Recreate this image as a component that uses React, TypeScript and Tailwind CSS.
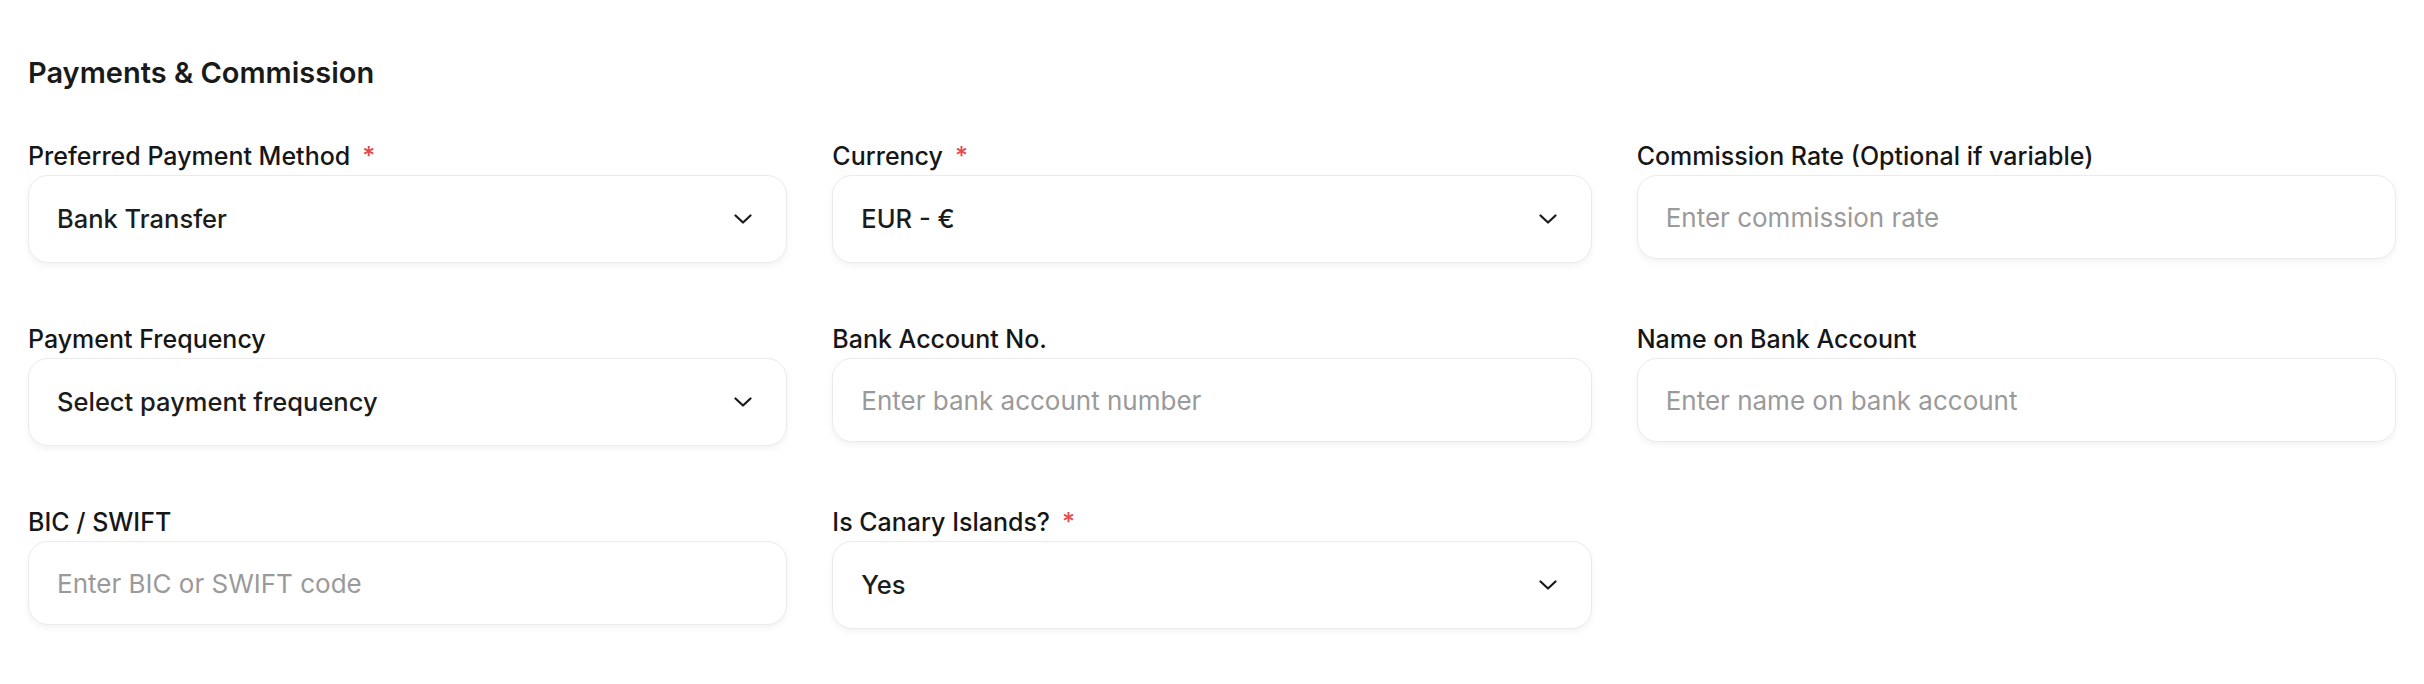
import React from "react"

type Field = {
  label: string
  required?: boolean
  kind: "select" | "input"
  value?: string
  placeholder?: string
}

const fields: Field[] = [
  { label: "Preferred Payment Method", required: true, kind: "select", value: "Bank Transfer" },
  { label: "Currency", required: true, kind: "select", value: "EUR - €" },
  { label: "Commission Rate (Optional if variable)", kind: "input", placeholder: "Enter commission rate" },
  { label: "Payment Frequency", kind: "select", value: "Select payment frequency" },
  { label: "Bank Account No.", kind: "input", placeholder: "Enter bank account number" },
  { label: "Name on Bank Account", kind: "input", placeholder: "Enter name on bank account" },
  { label: "BIC / SWIFT", kind: "input", placeholder: "Enter BIC or SWIFT code" },
  { label: "Is Canary Islands?", required: true, kind: "select", value: "Yes" },
]

function Chevron() {
  return (
    <svg width="18" height="10" viewBox="0 0 18 10" fill="none" className="shrink-0">
      <path d="M1.5 1.5 9 8.5l7.5-7" stroke="#1a1a1a" strokeWidth="2.2" strokeLinecap="round" strokeLinejoin="round" />
    </svg>
  )
}

function FormField({ field }: { field: Field }) {
  return (
    <div className="flex flex-col">
      {/* etiqueta */}
      <label className="mb-[6px] flex items-center text-[25px] leading-none font-medium text-[#161616]">
        {field.label}
        {field.required && <span className="ml-[12px] text-[#e5484d]">*</span>}
      </label>

      {field.kind === "select" ? (
        <div className="flex h-[88px] items-center justify-between rounded-[20px] border border-[#ebebeb] bg-white pl-[28px] pr-[34px] shadow-[0_3px_6px_rgba(0,0,0,0.05)]">
          <span className="text-[25.5px] font-medium text-[#1c1c1c]">{field.value}</span>
          <Chevron />
        </div>
      ) : (
        <div className="flex h-[84px] items-center rounded-[20px] border border-[#ebebeb] bg-white px-[28px] shadow-[0_3px_6px_rgba(0,0,0,0.05)]">
          <span className="text-[26px] text-[#9a9a9a]">{field.placeholder}</span>
        </div>
      )}
    </div>
  )
}

export default function App() {
  return (
    <div className="h-[684px] w-[2424px] bg-white px-[28px] pt-[58px] font-['Inter',sans-serif]">
      <h2 className="text-[29px] leading-none font-semibold text-[#1a1a1a]">Payments &amp; Commission</h2>

      <div className="mt-[57px] grid grid-cols-3 items-start gap-x-[45px] gap-y-[64px]">
        {fields.map((f) => (
          <FormField key={f.label} field={f} />
        ))}
      </div>
    </div>
  )
}
